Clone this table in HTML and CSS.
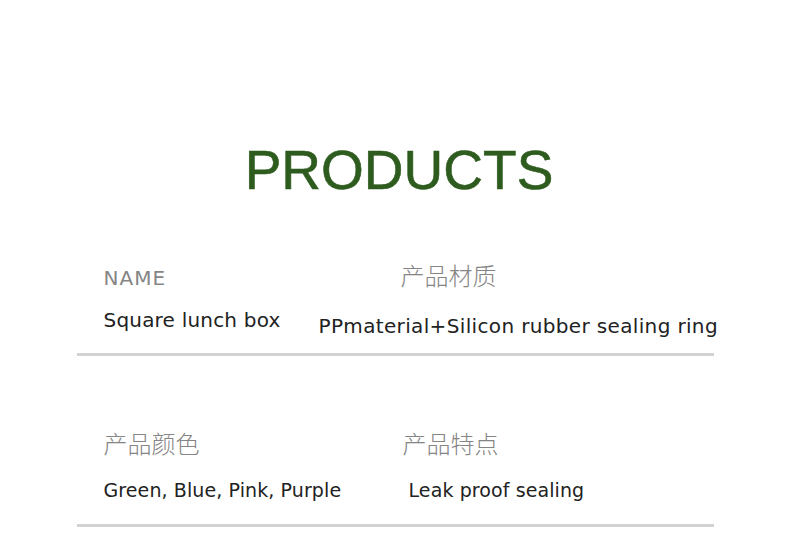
FILE: index.html
```html
<!DOCTYPE html>
<html lang="zh">
<head>
<meta charset="utf-8">
<title>Products</title>
<link rel="stylesheet" href="styles.css">
</head>
<body>
<main class="page">
  <h1 class="title">PRODUCTS</h1>

  <section class="spec spec-first">
    <div class="spec-row spec-head">
      <span class="label latin c-name">NAME</span>
      <span class="label cn">产品材质</span>
    </div>
    <div class="spec-row spec-value">
      <span class="value c-square">Square lunch box</span>
      <span class="value v-material">PPmaterial+Silicon rubber sealing ring</span>
    </div>
    <div class="divider"></div>
  </section>

  <section class="spec spec-second">
    <div class="spec-row spec-head">
      <span class="label cn c-color">产品颜色</span>
      <span class="label cn">产品特点</span>
    </div>
    <div class="spec-row spec-value">
      <span class="value small c-colors">Green, Blue, Pink, Purple</span>
      <span class="value small v-leak">Leak proof sealing</span>
    </div>
    <div class="divider"></div>
  </section>
</main>
</body>
</html>
```

FILE: styles.css
```css
html, body {
  margin: 0;
  padding: 0;
  background: #ffffff;
}

.page {
  width: 790px;
  height: 555px;
  overflow: hidden;
  display: flex;
  flex-direction: column;
  align-items: center;
}

.title {
  margin: 143px 0 0 8px;
  font-family: "Liberation Sans", Arial, sans-serif;
  font-weight: 400;
  font-size: 55px;
  line-height: 55px;
  letter-spacing: 0;
  color: #2e5c1f;
  -webkit-text-stroke: 0.6px #2e5c1f;
}

.spec {
  width: 637px;
  display: flex;
  flex-direction: column;
}

.spec-first {
  margin-top: 65px;
}

.spec-second {
  margin-top: 75px;
}

.spec-row {
  display: flex;
  padding-left: 27px;
}

.spec-row > span {
  flex-shrink: 0;
  white-space: nowrap;
}

.spec-head {
  align-items: baseline;
}

.spec-value {
  align-items: flex-start;
}

.label {
  color: #858585;
}

.latin {
  font-family: "DejaVu Sans", sans-serif;
  font-size: 20px;
  line-height: 24px;
  letter-spacing: 1px;
}

.cn {
  font-family: "Noto Sans CJK SC", "Noto Sans", sans-serif;
  font-size: 24px;
  line-height: 24px;
  font-weight: 300;
}

.c-name {
  width: 297px;
}

.c-color {
  width: 299px;
}

.value {
  font-family: "DejaVu Sans", sans-serif;
  font-size: 20px;
  line-height: 24px;
  letter-spacing: 0.2px;
  color: #222222;
}

.value.small {
  font-size: 19px;
  letter-spacing: 0.1px;
}

.spec-first .spec-value {
  margin-top: 18px;
}

.spec-second .spec-value {
  margin-top: 23px;
}

.c-square {
  width: 215px;
}

.v-material {
  margin-top: 6px;
  letter-spacing: 0.35px;
}

.c-colors {
  width: 305px;
}

.v-leak {
  letter-spacing: 0.25px;
}

.divider {
  height: 3px;
  background: #d2d2d2;
}

.spec-first .divider {
  margin-top: 15px;
}

.spec-second .divider {
  margin-top: 22px;
}
```
